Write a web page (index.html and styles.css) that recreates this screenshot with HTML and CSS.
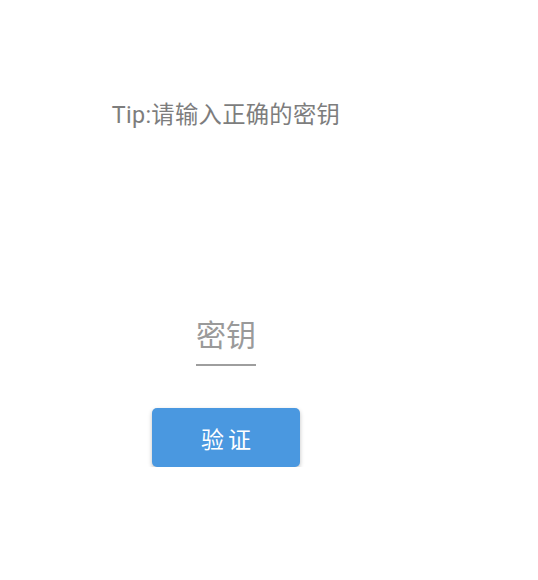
FILE: index.html
```html
<!DOCTYPE html>
<html>
<head>
<meta charset="utf-8">
<link rel="stylesheet" href="styles.css">
</head>
<body>
<div class="page">
  <p class="tip">Tip:请输入正确的密钥</p>
  <div class="field"><input class="key" type="text" placeholder="密钥"></div>
  <button class="verify">验证</button>
</div>
</body>
</html>
```
FILE: styles.css
```css
html, body { margin: 0; padding: 0; background: #fff; }
body { font-family: Roboto, "Noto Sans CJK SC", sans-serif; }
.page {
  width: 452px;
  display: flex;
  flex-direction: column;
  align-items: center;
  padding-top: 100px;
}
.tip {
  margin: 0;
  font-size: 23.3px;
  letter-spacing: 0.3px;
  line-height: 30px;
  color: #7d7d7d;
}
.field { margin-top: 186px; }
.key {
  width: 60px;
  border: none;
  border-bottom: 2px solid #9e9e9e;
  outline: none;
  padding: 0 0 8px 0;
  font-family: Roboto, "Noto Sans CJK SC", sans-serif;
  font-size: 30px;
  line-height: 40px;
  color: #333;
  background: transparent;
}
.key::placeholder { color: #9a9a9a; }
.verify {
  margin-top: 42px;
  width: 148px;
  height: 59px;
  border: none;
  border-radius: 5px;
  background: #4a98e0;
  color: #fff;
  font-family: Roboto, "Noto Sans CJK SC", sans-serif;
  font-size: 23px;
  letter-spacing: 4px;
  padding: 0 0 0 4px;
  box-shadow: 0 2px 4px rgba(0,0,0,0.25);
}
```
